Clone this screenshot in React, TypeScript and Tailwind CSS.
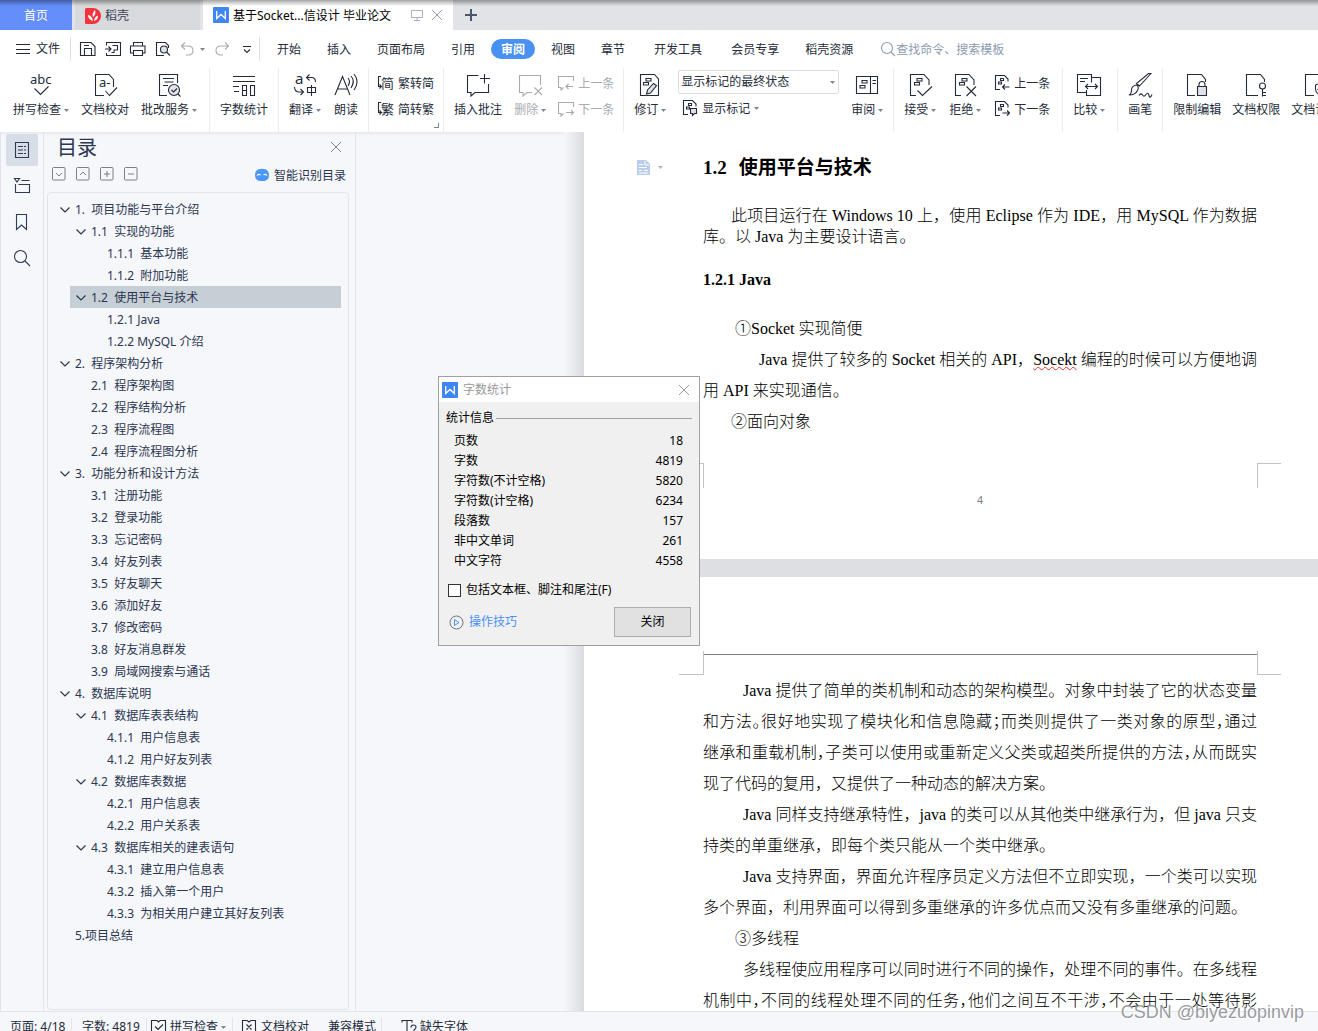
import React from 'react';

type IconProps = { children: React.ReactNode; size?: 'lg' | 'sm'; className?: string };

function Icon({ children, size = 'lg', className = '' }: IconProps) {
  return (
    <svg
      viewBox={size === 'lg' ? '0 0 24 24' : '0 0 16 16'}
      className={`${size === 'lg' ? 'h-6 w-6' : 'h-4 w-4'} shrink-0 overflow-visible ${className}`}
      fill="none"
      stroke="currentColor"
      strokeWidth="1.1"
      aria-hidden="true"
    >
      {children}
    </svg>
  );
}

function Caret({ className = 'text-[#7b8699]' }: { className?: string }) {
  return (
    <svg viewBox="0 0 5 3" className={`h-[3px] w-[5px] shrink-0 ${className}`} fill="currentColor" aria-hidden="true">
      <path d="M0 0h5L2.500 3z" />
    </svg>
  );
}

function GlyphText({ x, y, size, children }: { x: number; y: number; size: number; children: string }) {
  return (
    <text x={x} y={y} fontSize={size} fill="currentColor" stroke="none">
      {children}
    </text>
  );
}

function WpsLogo() {
  return (
    <svg viewBox="0 0 16 16" className="h-4 w-4 shrink-0" aria-hidden="true">
      <rect width="16" height="16" rx="1" fill="#3f86f5" />
      <path d="M3.700 4v7.500L8 7.500l4.300 4V4" fill="none" stroke="#fff" strokeWidth="1.300" />
    </svg>
  );
}

// page with two marked lines, shared by the revision icons
const markedPage = 'M8 22.500H2.500V1.500h13.500l5 5.500v5M9 5.500h5v2.500H9zM6.500 9.500h5V12h-5z';
const markedPageSmall = 'M6 14.500H1.500V.500h9l3.500 3.500v2.500M6.500 3.500h3v2h-3zM4.500 7h3v2h-3z';

const icons = {
  spell: (
    <Icon>
      <GlyphText x={1} y={11} size={13}>abc</GlyphText>
      <path d="M5.500 15.500l6 6 8-8" />
    </Icon>
  ),
  proof: (
    <Icon>
      <path d="M11 22.500H2.500V1.500h13.500l4.500 5V14M12.500 18l4 4.500 7.500-8" />
      <GlyphText x={6} y={14} size={13}>a-</GlyphText>
    </Icon>
  ),
  correct: (
    <Icon>
      <path d="M10 22.500H2.500V1.500h18V10M6 5.500h11M7.500 9h9M6 12.500h5" />
      <circle cx="17" cy="17" r="5.500" fill="#e1e4ea" />
      <path d="M14.500 17l2 2 3.500-3.500M21 21l2.500 2.500" />
    </Icon>
  ),
  count: (
    <Icon>
      <path d="M1 3.500h22M1 8.500h22M1 13.500h6M2 18.500h5M10.500 12.500h4v10h-4zM10.500 17.500h4M18.500 12.500h4v10h-4z" />
    </Icon>
  ),
  translate: (
    <Icon>
      <GlyphText x={2} y={11} size={15}>a</GlyphText>
      <path d="M16.500 1.500l-3 3 3 3M13.500 4.500h5q4 0 4 4.500M1.500 14q0 5 5 5h4M7.500 16l3 3-3 3M14.500 14.500h8v5h-8zM18.500 12v11" />
    </Icon>
  ),
  read: (
    <Icon>
      <path d="M1 22L8.500 3.500 16 22M3.500 16h10M14 5q3 3.500 0 8M17 3q4.500 5 0 12M20 1q6 7.500 0 16" />
    </Icon>
  ),
  addNote: (
    <Icon>
      <path d="M12.500 2.500h-11v17H5V23l4-3.500h13.500V11M18.500 1v9.500M14 5.500h10" />
    </Icon>
  ),
  deleteNote: (
    <Icon>
      <path d="M22.500 12V2.500h-21v17H5V23l4-3.500h5M16.500 14.500l7.500 7.500M24 14.500L16.500 22" />
    </Icon>
  ),
  revise: (
    <Icon>
      <path d="M20.500 8v14.500h-18V1.500h14l4 4.500zM8 5.500h5V8H8zM5.500 9.500h5V12h-5z" />
      <path d="M15.500 10.500l3 2-6 7.500-4 1 1-4z" fill="#dfe2e8" />
    </Icon>
  ),
  review: (
    <Icon>
      <path d="M1.500 3.500h21v17h-21zM15.500 3.500v17M17.500 7.500h3.500M17.500 10.500h3.500M7 7.500h5v2.500H7zM5 12.500h5V15H5z" />
    </Icon>
  ),
  accept: (
    <Icon>
      <path d={markedPage} />
      <path d="M9.500 17.500l5 5 9.500-9" />
    </Icon>
  ),
  reject: (
    <Icon>
      <path d={markedPage} />
      <path d="M13.500 13.500l9.500 9.500M23 13.500L13.500 23" />
    </Icon>
  ),
  compare: (
    <Icon>
      <path d="M9 19.500H.500v-18h14v8M3 5.500h8M3 8.500h5M14.500 4.500h9v18h-14V17M8.500 13.500h12M11 11l-2.500 2.500L11 16M18 11l2.500 2.500L18 16" />
    </Icon>
  ),
  brush: (
    <Icon>
      <path d="M23 .500L11.500 13l-3-2.500L20.500.500zM8.500 12q3 1.500 1 5.500-2 4.500-8.500 4.500 2.500-1 2.500-5t5-5zM11 22.500q2-3 3.500-.500t3.500-.500 3 1 3-1" />
    </Icon>
  ),
  lock: (
    <Icon>
      <path d="M10 22.500H2.500V1.500h14l4 5V9M14 13v-1.500q0-3 3-3t3 3V13" />
      <path d="M12.500 13.500h9v9h-9z" fill="#dfe2e8" />
    </Icon>
  ),
  key: (
    <Icon>
      <path d="M14 22.500H2.500V1.500h14l4 5V9" />
      <circle cx="18.500" cy="13" r="3" />
      <path d="M18.500 16v7.500M18.500 19.500H22M18.500 22.500H22" />
    </Icon>
  ),
  shield: (
    <Icon>
      <path d="M11 22.500H2.500V1.500h14l4 5V9M12.500 12l5-2 5 2v4q0 4-5 6.500-5-2.500-5-6.500zM14.500 16l2 2 4-4" />
    </Icon>
  ),
  toSimple: (
    <Icon size="sm">
      <path d="M3 1.500H.500v10H3M1.500 9.500l2 2-2 2" />
      <GlyphText x={3} y={13} size={13}>简</GlyphText>
    </Icon>
  ),
  toTrad: (
    <Icon size="sm">
      <path d="M3 1.500H.500v10H3M1.500 9.500l2 2-2 2" />
      <GlyphText x={3} y={13} size={13}>繁</GlyphText>
    </Icon>
  ),
  notePrev: (
    <Icon size="sm">
      <path d="M15.500 6V1.500h-15v11H3V15l2.500-2.500M15 11.500H8M10.500 9L8 11.500l2.500 2.500" />
    </Icon>
  ),
  noteNext: (
    <Icon size="sm">
      <path d="M15.500 6V1.500h-15v11H3V15l2.500-2.500M8 11.500h7.500M13 9l2.500 2.500L13 14" />
    </Icon>
  ),
  showMarks: (
    <Icon size="sm">
      <path d={markedPageSmall} />
      <path d="M8.500 8.500h6v5h-2L10.500 15.500v-2h-2z" fill="#dfe2e8" />
    </Icon>
  ),
  revPrev: (
    <Icon size="sm">
      <path d={markedPageSmall} />
      <path d="M15.500 12H8.500M11 9.500L8.500 12l2.500 2.500" />
    </Icon>
  ),
  revNext: (
    <Icon size="sm">
      <path d={markedPageSmall} />
      <path d="M8.500 12h7M13 9.500l2.500 2.500-2.500 2.500" />
    </Icon>
  ),
};

type ToolProps = { icon: React.ReactNode; label: string; caret?: boolean; disabled?: boolean };

function Tool({ icon, label, caret, disabled }: ToolProps) {
  return (
    <button type="button" disabled={disabled} className="flex shrink-0 flex-col items-center pt-[5px] disabled:text-[#a9abb0]">
      {icon}
      <span className="mt-[5px] flex items-center gap-[3px] whitespace-nowrap leading-4">
        {label}
        {caret && <Caret />}
      </span>
    </button>
  );
}

function SmallTool({ icon, label, caret, disabled }: ToolProps) {
  return (
    <button type="button" disabled={disabled} className="flex h-4 items-center gap-1 whitespace-nowrap disabled:text-[#a9abb0]">
      {icon}
      <span className="pt-0.5">{label}</span>
      {caret && <Caret />}
    </button>
  );
}

function Group({ children, className = 'gap-3 px-2.5' }: { children: React.ReactNode; className?: string }) {
  return <div className={`flex shrink-0 items-start border-r border-[#ececef] ${className}`}>{children}</div>;
}

function TabBar() {
  return (
    <div className="relative flex h-[30px] shrink-0 bg-[#e1e3e7]">
      <button type="button" className="w-[72px] bg-[#648efa] pt-0.5 text-white">首页</button>
      <button type="button" className="ml-[3px] flex w-[125px] items-center gap-1 bg-[#d9dadd] pt-0.5 pl-2.5 text-[#3d4250]">
        <svg viewBox="0 0 16 16" className="h-4 w-4" aria-hidden="true">
          <path d="M1.500 0H8a8 8 0 1 1 0 16H1.500Q0 16 0 14.500v-13Q0 0 1.500 0z" fill="#f5323c" />
          <path d="M8 13Q3 11.500 3 7q4 .500 5 6zM8 9Q6.500 5.500 10 2q1.500 4-2 7zM9 13q.500-4.500 4-5.500Q13 12 9 13z" fill="#fff" />
        </svg>
        稻壳
      </button>
      <div className="ml-[3px] flex w-[250px] items-center bg-white pl-2.5 text-black">
        <WpsLogo />
        <span className="ml-1 flex-1 pt-0.5 whitespace-nowrap">基于Socket...信设计 毕业论文</span>
        <svg viewBox="0 0 12 12" className="h-3 w-3 text-[#a8b1c2]" fill="none" stroke="currentColor" aria-hidden="true">
          <path d="M.500 1.500h11v7H.500zM6 8.500v2.500M3 11.500h6" />
        </svg>
        <button type="button" aria-label="关闭标签" className="ml-2 mr-2.5 text-[#8f9aae]">
          <svg viewBox="0 0 12 12" className="h-3 w-3" stroke="currentColor">
            <path d="M1 1l10 10M11 1L1 11" />
          </svg>
        </button>
      </div>
      <button type="button" aria-label="新建" className="ml-3 text-[#4b566b]">
        <svg viewBox="0 0 12 12" className="h-3 w-3" stroke="currentColor" strokeWidth="2">
          <path d="M6 0v12M0 6h12" />
        </svg>
      </button>
      <div className="pointer-events-none absolute inset-x-0 top-0 h-1.5 bg-linear-to-b from-black/35 to-transparent" />
    </div>
  );
}

function MenuItem({ label, className = '' }: { label: string; className?: string }) {
  return <button type="button" className={`shrink-0 whitespace-nowrap px-[13px] pt-0.5 ${className}`}>{label}</button>;
}

function MenuBar() {
  return (
    <div className="flex h-[38px] shrink-0 items-center">
      <button type="button" className="flex items-center gap-1.5 pl-4 whitespace-nowrap">
        <svg viewBox="0 0 14 12" className="h-3 w-3.5" stroke="currentColor" aria-hidden="true">
          <path d="M0 1.500h14M0 6.500h14M0 10.500h14" />
        </svg>
        文件
      </button>
      <div className="ml-2.5 h-6 w-px bg-[#dfe1e6]" />
      <div className="flex shrink-0 items-center gap-[9px] pl-[9px]">
        <button type="button" aria-label="保存">
          <Icon size="sm">
            <path d="M.500 1.500h10.500l4 4v9H.500zM4.500 14.500v-7h7v7M4 4.500h5" />
          </Icon>
        </button>
        <button type="button" aria-label="输出为PDF">
          <Icon size="sm">
            <path d="M1.500 4.500V1.500h14v13h-14V12M0 8h5.500M3.500 5.500L6 8l-2.500 2.500M7.500 4.500h5v4.500H9v2.500H6.500" />
          </Icon>
        </button>
        <button type="button" aria-label="打印">
          <Icon size="sm">
            <path d="M3.500 5V1.500h9V5M3.500 12H.500V5h14.500v7h-2.500M3.500 9.500h9v5h-9z" />
          </Icon>
        </button>
        <button type="button" aria-label="打印预览">
          <Icon size="sm">
            <path d="M9 14.500H1.500v-13h9l3 3V7" />
            <circle cx="9" cy="8.500" r="3.500" fill="#dfe2e8" />
            <path d="M11.500 11l3.500 3.500" />
          </Icon>
        </button>
        <button type="button" aria-label="撤销" className="flex items-center gap-1 text-[#a9abb0]">
          <Icon size="sm">
            <path d="M5 1.500l-3.500 3.500L5 8.500M1.500 5H8q5 0 5 4.500T8 14H6" />
          </Icon>
          <Caret />
        </button>
        <button type="button" aria-label="恢复" className="text-[#a9abb0]">
          <Icon size="sm">
            <path d="M11 1.500l3.500 3.500L11 8.500M14.500 5H7Q2 5 2 9.500T7 14h2" />
          </Icon>
        </button>
        <button type="button" aria-label="自定义">
          <Icon size="sm">
            <path d="M4 5.500h8M5 8.500l3 3 3-3" />
          </Icon>
        </button>
      </div>
      <div className="ml-1 h-6 w-px bg-[#dfe1e6]" />
      <nav className="ml-1 flex shrink-0 items-center">
        <MenuItem label="开始" />
        <MenuItem label="插入" />
        <MenuItem label="页面布局" />
        <MenuItem label="引用" />
        <button type="button" className="mx-[3px] h-5 w-11 rounded-full bg-[#4991f2] pt-px font-bold text-white">审阅</button>
        <MenuItem label="视图" />
        <MenuItem label="章节" />
        <MenuItem label="开发工具" className="ml-[3px]" />
        <MenuItem label="会员专享" className="ml-[3px]" />
        <MenuItem label="稻壳资源" />
      </nav>
      <label className="ml-3.5 flex min-w-0 flex-1 items-center text-[#8d9ab0]">
        <Icon size="sm">
          <circle cx="7" cy="7" r="5.500" />
          <path d="M11 11l4 4" />
        </Icon>
        <input
          type="text"
          aria-label="查找命令、搜索模板"
          placeholder="查找命令、搜索模板"
          className="w-40 min-w-0 pt-px outline-none placeholder:text-[#8d9ab0]"
        />
      </label>
    </div>
  );
}

function Ribbon() {
  return (
    <div className="flex h-16 shrink-0 overflow-hidden">
      <Group className="gap-3 pl-[13px] pr-3">
        <Tool icon={icons.spell} label="拼写检查" caret />
        <Tool icon={icons.proof} label="文档校对" />
        <Tool icon={icons.correct} label="批改服务" caret />
      </Group>
      <Group>
        <Tool icon={icons.count} label="字数统计" />
      </Group>
      <Group className="gap-[13px] px-2.5">
        <Tool icon={icons.translate} label="翻译" caret />
        <Tool icon={icons.read} label="朗读" />
      </Group>
      <Group className="relative px-[9px]">
        <div className="flex flex-col gap-2.5 pt-[7px]">
          <SmallTool icon={icons.toSimple} label="繁转简" />
          <SmallTool icon={icons.toTrad} label="简转繁" />
        </div>
        <div className="absolute right-1 bottom-1 h-[5px] w-[5px] border-r border-b border-[#7b8699]" />
      </Group>
      <Group className="gap-3 pr-[9px] pl-2.5">
        <Tool icon={icons.addNote} label="插入批注" />
        <Tool icon={icons.deleteNote} label="删除" caret disabled />
        <div className="flex flex-col gap-2.5 pt-[7px]">
          <SmallTool icon={icons.notePrev} label="上一条" disabled />
          <SmallTool icon={icons.noteNext} label="下一条" disabled />
        </div>
      </Group>
      <Group className="gap-3 px-2.5">
        <Tool icon={icons.revise} label="修订" caret />
        <div className="flex flex-col gap-1.5 pt-0.5">
          <div className="relative flex items-center">
            <select aria-label="标记状态" className="h-6 w-[161px] appearance-none rounded-xs border border-[#dcdee3] bg-white pl-0.5">
              <option>显示标记的最终状态</option>
            </select>
            <Caret className="pointer-events-none absolute right-1 text-[#7b8699]" />
          </div>
          <div className="pl-1">
            <SmallTool icon={icons.showMarks} label="显示标记" caret />
          </div>
        </div>
        <Tool icon={icons.review} label="审阅" caret />
      </Group>
      <Group className="gap-[13px] pr-3 pl-2.5">
        <Tool icon={icons.accept} label="接受" caret />
        <Tool icon={icons.reject} label="拒绝" caret />
        <div className="flex flex-col gap-2.5 pt-[7px]">
          <SmallTool icon={icons.revPrev} label="上一条" />
          <SmallTool icon={icons.revNext} label="下一条" />
        </div>
      </Group>
      <Group className="pr-3 pl-2.5">
        <Tool icon={icons.compare} label="比较" caret />
      </Group>
      <Group>
        <Tool icon={icons.brush} label="画笔" />
      </Group>
      <div className="flex shrink-0 items-start gap-[11px] pl-2.5">
        <Tool icon={icons.lock} label="限制编辑" />
        <Tool icon={icons.key} label="文档权限" />
        <Tool icon={icons.shield} label="文档认证" />
      </div>
    </div>
  );
}

function SideRail() {
  return (
    <div className="flex w-11 shrink-0 flex-col items-center gap-1 border-x border-[#e1e4ea] pt-0.5 text-[#2f3b55]">
      <button type="button" aria-label="目录" className="flex h-8 w-8 items-center justify-center rounded-xs bg-[#d8dee7]">
        <Icon size="sm">
          <path d="M1.500.500h13v15h-13zM4 4.500h5M10 4.500h2M4 8h5M10 8h2M4 11.500h5M10 11.500h2" />
        </Icon>
      </button>
      <button type="button" aria-label="章节" className="flex h-8 w-8 items-center justify-center">
        <Icon size="sm">
          <path d="M.500.500h5L3 4zM7.500 2.500h8M1.500 6v8.500h14v-8H4.500" />
        </Icon>
      </button>
      <button type="button" aria-label="书签" className="flex h-8 w-8 items-center justify-center">
        <Icon size="sm">
          <path d="M2.500.500h10v15l-5-4.500-5 4.500z" />
        </Icon>
      </button>
      <button type="button" aria-label="查找" className="flex h-8 w-8 items-center justify-center">
        <Icon size="sm">
          <circle cx="6.500" cy="6.500" r="6" />
          <path d="M11 11l5 5" />
        </Icon>
      </button>
    </div>
  );
}

type OutlineItem = { level: 0 | 1 | 2; text: string; open?: boolean; active?: boolean };

const outline: OutlineItem[] = [
  { level: 0, text: '1.  项目功能与平台介绍', open: true },
  { level: 1, text: '1.1  实现的功能', open: true },
  { level: 2, text: '1.1.1  基本功能' },
  { level: 2, text: '1.1.2  附加功能' },
  { level: 1, text: '1.2  使用平台与技术', open: true, active: true },
  { level: 2, text: '1.2.1 Java' },
  { level: 2, text: '1.2.2 MySQL 介绍' },
  { level: 0, text: '2.  程序架构分析', open: true },
  { level: 1, text: '2.1  程序架构图' },
  { level: 1, text: '2.2  程序结构分析' },
  { level: 1, text: '2.3  程序流程图' },
  { level: 1, text: '2.4  程序流程图分析' },
  { level: 0, text: '3.  功能分析和设计方法', open: true },
  { level: 1, text: '3.1  注册功能' },
  { level: 1, text: '3.2  登录功能' },
  { level: 1, text: '3.3  忘记密码' },
  { level: 1, text: '3.4  好友列表' },
  { level: 1, text: '3.5  好友聊天' },
  { level: 1, text: '3.6  添加好友' },
  { level: 1, text: '3.7  修改密码' },
  { level: 1, text: '3.8  好友消息群发' },
  { level: 1, text: '3.9  局域网搜索与通话' },
  { level: 0, text: '4.  数据库说明', open: true },
  { level: 1, text: '4.1  数据库表表结构', open: true },
  { level: 2, text: '4.1.1  用户信息表' },
  { level: 2, text: '4.1.2  用户好友列表' },
  { level: 1, text: '4.2  数据库表数据', open: true },
  { level: 2, text: '4.2.1  用户信息表' },
  { level: 2, text: '4.2.2  用户关系表' },
  { level: 1, text: '4.3  数据库相关的建表语句', open: true },
  { level: 2, text: '4.3.1  建立用户信息表' },
  { level: 2, text: '4.3.2  插入第一个用户' },
  { level: 2, text: '4.3.3  为相关用户建立其好友列表' },
  { level: 0, text: '5.项目总结' },
];

const indents = ['ml-1.5', 'ml-[22px]', 'ml-[38px]'];

const treeButtons = [
  { label: '展开', d: 'M4 6l3 3 3-3' },
  { label: '收起', d: 'M4 8l3-3 3 3' },
  { label: '增加级别', d: 'M7 4v6M4 7h6' },
  { label: '减少级别', d: 'M4 7h6' },
];

function OutlinePanel() {
  return (
    <aside className="flex w-[312px] shrink-0 flex-col border-r border-[#e1e4ea] pr-1.5 pb-px pl-[3px] text-[#2c3650]">
      <div className="flex h-[30px] items-center justify-between pr-2 pl-2.5">
        <h2 className="pt-0.5 text-[20px] leading-[30px]">目录</h2>
        <button type="button" aria-label="关闭目录" className="text-[#7d8594]">
          <svg viewBox="0 0 10 10" className="h-2.5 w-2.5" stroke="currentColor">
            <path d="M0 0l10 10M10 0L0 10" />
          </svg>
        </button>
      </div>
      <div className="flex h-[30px] items-start justify-between pt-1 pr-[3px] pl-[5px]">
        <div className="flex gap-2.5">
          {treeButtons.map((b) => (
            <button key={b.label} type="button" aria-label={b.label} className="text-[#7c7f86]">
              <svg viewBox="0 0 14 14" className="mt-px h-3.5 w-3.5" fill="none" stroke="currentColor">
                <rect x=".5" y=".5" width="12.500" height="12.500" rx="1" />
                <path d={b.d} />
              </svg>
            </button>
          ))}
        </div>
        <button type="button" className="flex items-center gap-1 leading-4">
          <svg viewBox="0 0 16 16" className="h-4 w-4" aria-hidden="true">
            <path d="M4 2.500Q8 1 12 2.500q3 1.500 3 5.500t-3 5.500q-4 1-8 0-3-1.500-3-5.500t3-5.500z" fill="#4a97f5" />
            <path d="M3 8.500q1.500-2 3.500-.500M9.500 8q2-1.500 3.500.500" fill="none" stroke="#fff" strokeWidth="1.200" />
          </svg>
          <span className="pt-0.5">智能识别目录</span>
        </button>
      </div>
      <ul className="min-h-0 flex-1 overflow-hidden rounded-sm border border-[#e1e4ea] pt-[5px] pr-[7px]">
        {outline.map((item) => (
          <li key={item.text} className={indents[item.level]}>
            <button
              type="button"
              className={`flex h-[22px] w-full items-center pt-0.5 text-left whitespace-pre ${item.active ? 'bg-[#c6ced6]' : ''}`}
            >
              <span className="w-[21px] pl-1.5">
                {item.open && (
                  <svg viewBox="0 0 10 6" className="h-1.5 w-2.5" fill="none" stroke="currentColor" strokeWidth="1.200">
                    <path d="M.5 .5L5 5 9.500.5" />
                  </svg>
                )}
              </span>
              {item.text}
            </button>
          </li>
        ))}
      </ul>
    </aside>
  );
}

type LineProps = { children: React.ReactNode; indent?: string; full?: boolean; tight?: boolean; height?: string };

// tight sets full-width punctuation at half width, for lines that hold one character too many
function Line({ children, indent = '', full, tight, height = 'leading-[31px]' }: LineProps) {
  return (
    <p
      className={`${height} ${indent} whitespace-nowrap ${full ? '[text-align-last:justify]' : ''} ${
        tight ? "[font-feature-settings:'halt']" : ''
      }`}
    >
      {children}
    </p>
  );
}

function DocumentPages() {
  return (
    <div className="flex min-w-0 flex-1 overflow-hidden">
      <div className="ml-[208px] w-5 shrink-0 bg-linear-to-r from-[#f5f7fa] to-[#d9dbde]" />
      <div className="w-[792px] shrink-0 bg-[#dddfe2] font-['Liberation_Serif','Noto_Sans_CJK_SC',serif] text-[16px] font-light text-black">
        <section className="bg-white px-[119px] pt-5 pb-[52px]">
          <div className="-ml-[66px] flex items-center">
            <button type="button" aria-label="段落布局" className="flex w-[66px] items-center gap-2 text-[#b4b4b4]">
              <svg viewBox="0 0 13 16" className="h-4 w-[13px]" aria-hidden="true">
                <path d="M0 0h9l4 4v11H0z" fill="#b9cdec" />
                <path d="M8 1v4h4M2 4.500h4M2 7.500h8M2 10.500h3M7 10.500h4M2 13h9" stroke="#fff" fill="none" />
              </svg>
              <Caret className="text-[#b4b4b4]" />
            </button>
            <h1 className="flex gap-3 text-[19px] leading-[31px] font-bold">
              <span>1.2</span>
              <span>使用平台与技术</span>
            </h1>
          </div>
          <div className="mt-[22px]">
            <Line indent="pl-7" height="leading-[21px]" full>
              此项目运行在 Windows 10 上，使用 Eclipse 作为 IDE，用 MySQL 作为数据
            </Line>
            <Line height="leading-[21px]">库。以 Java 为主要设计语言。</Line>
          </div>
          <h2 className="mt-[17px] leading-[31px] font-bold">1.2.1 Java</h2>
          <div className="mt-[18px]">
            <Line indent="pl-8">①Socket 实现简便</Line>
            <Line indent="pl-14" full>
              Java 提供了较多的 Socket 相关的 API，
              <span className="underline decoration-[#e03030] decoration-wavy decoration-1">Socekt</span> 编程的时候可以方便地调
            </Line>
            <Line>用 API 来实现通信。</Line>
            <Line indent="pl-7">②面向对象</Line>
          </div>
          <div className="-mx-6 mt-[26px] flex justify-between">
            <div className="h-[25px] w-[25px] border-t border-r border-[#c3c3c3]" />
            <div className="h-[25px] w-6 border-t border-l border-[#c3c3c3]" />
          </div>
          <p className="mt-[5px] text-center font-['Liberation_Sans',sans-serif] text-[11px] leading-[14px] text-[#808080]">4</p>
        </section>
        <section className="mt-[18px] bg-white px-[119px] pt-[74px]">
          <div className="-mx-6 flex justify-between">
            <div className="h-6 w-[25px] border-r border-b border-[#c3c3c3]" />
            <div className="mt-[3px] flex-1 border-t border-[#7f7f7f]" />
            <div className="h-6 w-6 border-b border-l border-[#c3c3c3]" />
          </div>
          <Line indent="pl-10" full>Java 提供了简单的类机制和动态的架构模型。对象中封装了它的状态变量</Line>
          <Line full tight>和方法。很好地实现了模块化和信息隐藏；而类则提供了一类对象的原型，通过</Line>
          <Line full tight>继承和重载机制，子类可以使用或重新定义父类或超类所提供的方法，从而既实</Line>
          <Line>现了代码的复用，又提供了一种动态的解决方案。</Line>
          <Line indent="pl-10" full>Java 同样支持继承特性，java 的类可以从其他类中继承行为，但 java 只支</Line>
          <Line>持类的单重继承，即每个类只能从一个类中继承。</Line>
          <Line indent="pl-10" full>Java 支持界面，界面允许程序员定义方法但不立即实现，一个类可以实现</Line>
          <Line>多个界面，利用界面可以得到多重继承的许多优点而又没有多重继承的问题。</Line>
          <Line indent="pl-8">③多线程</Line>
          <Line indent="pl-10" full>多线程使应用程序可以同时进行不同的操作，处理不同的事件。在多线程</Line>
          <Line full tight>机制中，不同的线程处理不同的任务，他们之间互不干涉，不会由于一处等待影</Line>
        </section>
      </div>
    </div>
  );
}

const stats = [
  { name: '页数', value: 18 },
  { name: '字数', value: 4819 },
  { name: '字符数(不计空格)', value: 5820 },
  { name: '字符数(计空格)', value: 6234 },
  { name: '段落数', value: 157 },
  { name: '非中文单词', value: 261 },
  { name: '中文字符', value: 4558 },
];

function WordCountDialog() {
  return (
    <div
      role="dialog"
      aria-label="字数统计"
      className="absolute top-[376px] left-[438px] w-[262px] border border-[#a0a0a0] bg-[#f0f0f0] text-black"
    >
      <div className="flex h-[25px] items-center gap-[5px] bg-white pr-2.5 pl-[3px] text-[#999]">
        <WpsLogo />
        <span className="flex-1">字数统计</span>
        <button type="button" aria-label="关闭窗口">
          <svg viewBox="0 0 10 10" className="h-2.5 w-2.5" stroke="currentColor">
            <path d="M0 0l10 10M10 0L0 10" />
          </svg>
        </button>
      </div>
      <div className="flex items-center pt-[7px] pr-[7px] pl-[7px] leading-[18px]">
        统计信息
        <div className="ml-0.5 h-px flex-1 bg-[#a0a0a0]" />
      </div>
      <table className="mt-1 w-full">
        <tbody>
          {stats.map((s) => (
            <tr key={s.name} className="h-5 leading-5">
              <th scope="row" className="pl-[15px] text-left font-normal">{s.name}</th>
              <td className="pr-4 text-right">{s.value}</td>
            </tr>
          ))}
        </tbody>
      </table>
      <label className="mt-[9px] flex items-center gap-[5px] pl-[9px] leading-5">
        <input type="checkbox" className="h-[13px] w-[13px] appearance-none border border-[#333] bg-white" />
        包括文本框、脚注和尾注(F)
      </label>
      <div className="mt-[7px] mb-2 flex items-center justify-between pr-2 pl-2.5">
        <a href="#tips" className="flex items-center gap-[5px] text-[#4a90f5]">
          <svg viewBox="0 0 15 15" className="h-[15px] w-[15px]" fill="none" aria-hidden="true">
            <circle cx="7.500" cy="7.500" r="6.500" stroke="#70757d" />
            <path d="M5.500 4.500v6l4.500-3z" stroke="#4a90f5" />
          </svg>
          操作技巧
        </a>
        <button type="button" className="h-[30px] w-[77px] border border-[#adadad] bg-[#e1e1e1]">关闭</button>
      </div>
    </div>
  );
}

function StatusBar() {
  return (
    <footer className="flex h-5 shrink-0 items-start overflow-hidden border-t border-[#e1e4ea] pt-1.5 pl-2.5 leading-[18px] whitespace-nowrap">
      <span className="w-[62px] border-r border-[#e1e4ea]">页面: 4/18</span>
      <span className="w-[75px] border-r border-[#e1e4ea] pl-[10px]">字数: 4819</span>
      <button type="button" className="flex w-[86px] items-center gap-[3px] border-r border-[#e1e4ea] pl-1">
        <Icon size="sm">
          <path d="M6 1.500H.500v13h14v-13H9M6 1.500l1.500 1.500L9 1.500M4 7.500l3 3 5-5" />
        </Icon>
        拼写检查
        <Caret />
      </button>
      <button type="button" className="flex items-center gap-1 pl-2">
        <Icon size="sm">
          <path d="M6 1.500H1.500v13h13v-13H10M6 1.500L8 3l2-1.500M5.500 5.500l5 5M10.500 5.500l-5 5" />
        </Icon>
        文档校对
      </button>
      <span className="ml-[19px] w-[54px] border-r border-[#e1e4ea]">兼容模式</span>
      <button type="button" className="flex items-center gap-[3px] pl-[19px]">
        <Icon size="sm">
          <path d="M1 3.500v-2h10v2M6 1.500v12.500M4 14h4M10 8.500q0-2.500 2.500-2.500T15 8t-2 3v1.500M13 14v1" />
        </Icon>
        缺失字体
      </button>
    </footer>
  );
}

export default function App() {
  return (
    <div className="relative flex h-screen flex-col overflow-hidden bg-white font-['Noto_Sans','Noto_Sans_CJK_SC',sans-serif] text-[12px] text-[#252b3a]">
      <TabBar />
      <MenuBar />
      <Ribbon />
      <main className="flex min-h-0 flex-1 bg-[#f5f7fa] shadow-[inset_0_2px_2px_#e9eaec]">
        <SideRail />
        <OutlinePanel />
        <DocumentPages />
      </main>
      <div className="bg-[#f5f7fa]">
        <StatusBar />
      </div>
      <WordCountDialog />
      <div className="pointer-events-none absolute right-3.5 bottom-2 font-['Liberation_Sans',sans-serif] text-[18px] leading-[22px] text-[#8e9094]/90 [text-shadow:1px_1px_0_#fff]">
        CSDN @biyezuopinvip
      </div>
    </div>
  );
}
